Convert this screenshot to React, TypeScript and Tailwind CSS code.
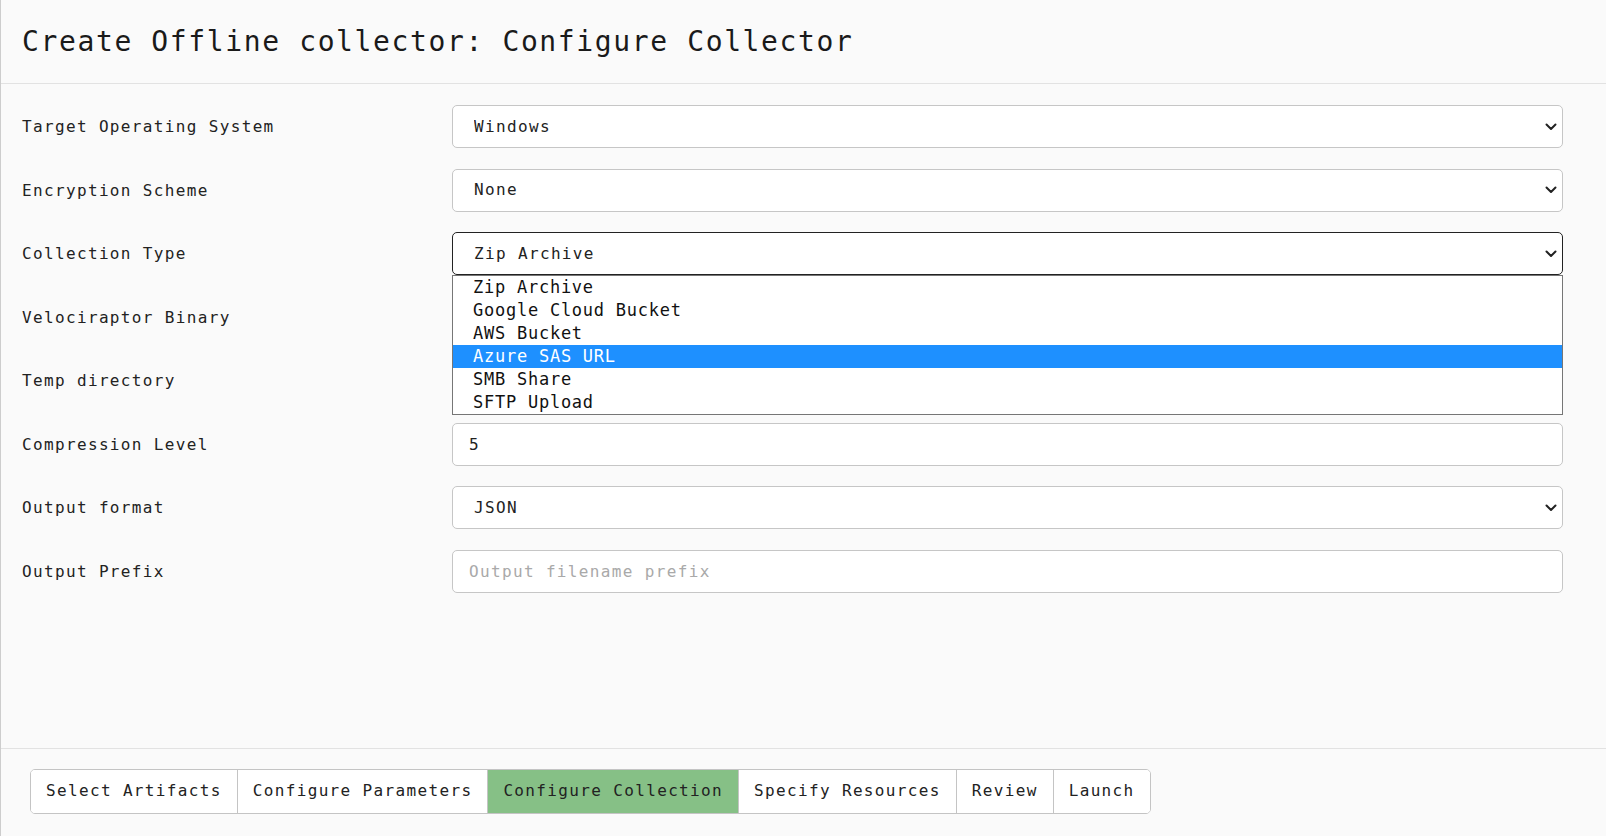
import React from "react";

const Chevron = () => (
  <svg
    className="pointer-events-none absolute right-[6px] top-1/2 -translate-y-1/2"
    width="12"
    height="8"
    viewBox="0 0 12 8"
    fill="none"
  >
    <path d="M1.5 1.5L6 6l4.5-4.5" stroke="#222" strokeWidth="2" strokeLinecap="round" strokeLinejoin="round" />
  </svg>
);

function SelectBox({ value, focused }: { value: string; focused?: boolean }) {
  return (
    <div className="relative h-[43px] w-full">
      <select
        defaultValue={value}
        className={
          "h-full w-full appearance-none rounded-[5px] bg-white pl-[21px] pr-8 text-[16px] tracking-[1.35px] text-[#222] outline-none font-['DejaVu_Sans_Mono',monospace] " +
          (focused ? "border-[1.5px] border-[#222]" : "border border-[#c6c6c6]")
        }
      >
        <option>{value}</option>
      </select>
      <Chevron />
    </div>
  );
}

function TextBox({ value, placeholder }: { value?: string; placeholder?: string }) {
  return (
    <input
      defaultValue={value}
      placeholder={placeholder}
      className="h-[43px] w-full rounded-[5px] border border-[#c6c6c6] bg-white pl-[16px] text-[16px] tracking-[1.35px] text-[#222] outline-none placeholder:text-[#a9a9a9] font-['DejaVu_Sans_Mono',monospace]"
    />
  );
}

const options = ["Zip Archive", "Google Cloud Bucket", "AWS Bucket", "Azure SAS URL", "SMB Share", "SFTP Upload"];

function Row({ label, children }: { label: string; children: React.ReactNode }) {
  return (
    <div className="grid grid-cols-[430px_1fr] items-center">
      <div className="pt-[1px] text-[16px] tracking-[1.35px] text-[#222]">{label}</div>
      {children}
    </div>
  );
}

const steps = [
  "Select Artifacts",
  "Configure Parameters",
  "Configure Collection",
  "Specify Resources",
  "Review",
  "Launch",
];

export default function App() {
  return (
    <div className="flex h-[836px] w-[1606px] flex-col overflow-hidden border-l border-[#cdcdcd] bg-[#fafafa] text-[#222] font-['DejaVu_Sans_Mono',monospace]">
      <header className="flex h-[84px] shrink-0 items-center border-b border-[#e2e2e2] pl-[21px] pt-[1px]">
        <h1 className="text-[28px] tracking-[1.62px] text-[#1a1a1a]">
          Create Offline collector: Configure Collector
        </h1>
      </header>

      <main className="flex flex-1 flex-col gap-[20.5px] pl-[21px] pr-[43px] pt-[21px]">
        <Row label="Target Operating System">
          <SelectBox value="Windows" />
        </Row>
        <Row label="Encryption Scheme">
          <SelectBox value="None" />
        </Row>
        <Row label="Collection Type">
          <div className="relative">
            <SelectBox value="Zip Archive" focused />
            <div className="absolute left-0 right-0 top-full z-10 border border-[#767676] bg-white">
              {options.map((o) => (
                <div
                  key={o}
                  className={
                    "flex h-[23px] items-center pl-[20px] text-[17px] tracking-[0.75px] " +
                    (o === "Azure SAS URL" ? "bg-[#1e90ff] text-white" : "text-[#111]")
                  }
                >
                  {o}
                </div>
              ))}
            </div>
          </div>
        </Row>
        <Row label="Velociraptor Binary">
          <SelectBox value="Auto" />
        </Row>
        <Row label="Temp directory">
          <TextBox placeholder="Temp directory" />
        </Row>
        <Row label="Compression Level">
          <TextBox value="5" />
        </Row>
        <Row label="Output format">
          <SelectBox value="JSON" />
        </Row>
        <Row label="Output Prefix">
          <TextBox placeholder="Output filename prefix" />
        </Row>
      </main>

      <footer className="h-[88px] shrink-0 border-t border-[#e2e2e2] pl-[29px] pt-[20px]">
        <div className="inline-flex h-[45px] overflow-hidden rounded-[5px] border border-[#c4c4c4] bg-white">
          {steps.map((s, i) => (
            <button
              key={s}
              className={
                "flex h-full items-center px-[15px] pb-[2px] text-[16px] tracking-[1.35px] text-[#222] " +
                (i > 0 ? "border-l border-[#c4c4c4] " : "") +
                (s === "Configure Collection" ? "bg-[#86c086]" : "bg-white")
              }
            >
              {s}
            </button>
          ))}
        </div>
      </footer>
    </div>
  );
}
